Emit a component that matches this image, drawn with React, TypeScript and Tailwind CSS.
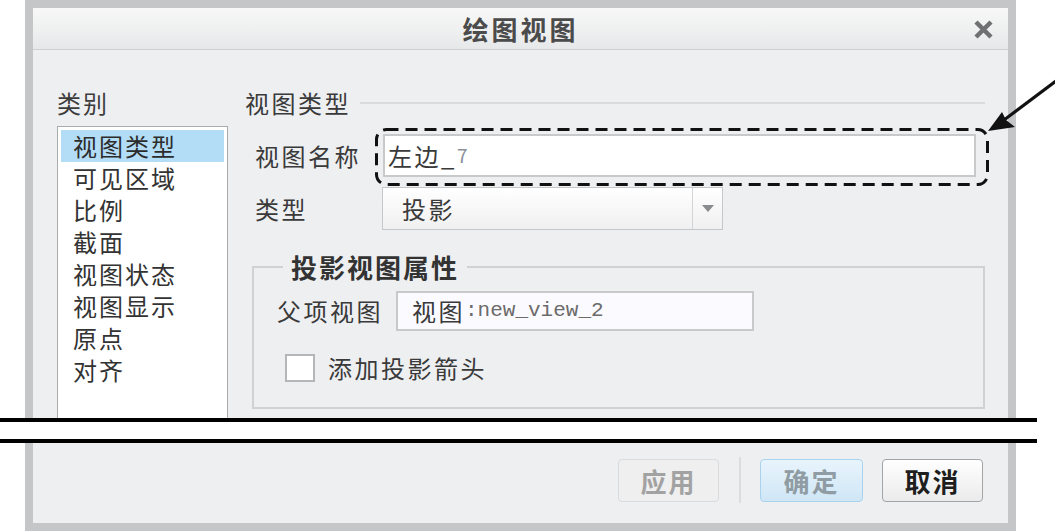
import React from 'react';

const categories = ['视图类型', '可见区域', '比例', '截面', '视图状态', '视图显示', '原点', '对齐'];

function TitleBar() {
  return (
    <div className="grid h-[42px] shrink-0 grid-cols-[1fr_auto_1fr] items-center border-b border-[#cdcfd1] bg-linear-to-b from-[#f8f8f8] to-[#e7e8e9]">
      <div />
      <div className="text-[26px] leading-[42px] font-bold tracking-[3px] text-[#4b4b4b]">绘图视图</div>
      <div className="flex justify-end pr-[15px]">
        <svg width="19" height="19" viewBox="0 0 19 19">
          <path d="M2 2 L17 17 M17 2 L2 17" stroke="#6f7072" strokeWidth="4.5" />
        </svg>
      </div>
    </div>
  );
}

function CategoryList() {
  return (
    <div className="flex flex-col pt-[37px]">
      <div className="h-[32px] text-[24px] leading-[32px] tracking-[2px] text-[#3c3c3c]">类别</div>
      <div className="mt-[7px] flex w-[171px] flex-1 flex-col border border-b-0 border-[#a9abad] bg-white px-[3px] pt-[3px]">
        {categories.map((c, i) => (
          <div
            key={c}
            className={
              i === 0
                ? 'h-[32px] bg-[#b3dcf6] pl-[12px] text-[24px] leading-[32px] tracking-[2px] text-[#2c2c2c]'
                : 'h-[32px] pl-[12px] text-[24px] leading-[32px] tracking-[2px] text-[#333]'
            }
          >
            {c}
          </div>
        ))}
      </div>
    </div>
  );
}

function ViewTypePanel() {
  return (
    <div className="ml-[17px] flex w-[740px] flex-col pt-[37px] text-[24px] tracking-[2.5px] text-[#3a3a3a]">
      <div className="flex h-[32px] items-center">
        <span className="leading-[32px]">视图类型</span>
        <div className="ml-[9px] h-[2px] flex-1 bg-[#dadbdd]" />
      </div>

      <div className="mt-[15px] flex h-[43px] items-center">
        <div className="w-[138px] pl-[10px]">视图名称</div>
        <div className="relative flex h-[43px] w-[593px] items-center border-2 border-[#c8c9cb] bg-white pl-[3px]">
          <span>左边_</span>
          <span className="text-[19px] text-[#8a8f99]">7</span>
          <svg className="pointer-events-none absolute left-[-10px] top-[-8px]" width="614" height="58" viewBox="0 0 614 58">
            <rect x="1.5" y="1.5" width="611" height="55" rx="10" fill="none" stroke="#111" strokeWidth="3" strokeDasharray="12 7" />
          </svg>
        </div>
      </div>

      <div className="mt-[10px] flex h-[43px] items-center">
        <div className="w-[137px] pl-[10px]">类型</div>
        <div className="flex h-[43px] w-[341px] items-stretch border border-[#c6c7c9] bg-linear-to-b from-white to-[#f0f0f0]">
          <div className="flex flex-1 items-center pl-[19px]">投影</div>
          <div className="flex w-[30px] items-center justify-center border-l border-[#d3d4d6]">
            <svg width="12" height="7" viewBox="0 0 12 7">
              <path d="M0 0 H12 L6 7 Z" fill="#8a8b8d" />
            </svg>
          </div>
        </div>
      </div>

      <fieldset className="mt-[21px] ml-[7px] h-[158px] w-[733px] border-2 border-[#cfd1d3]">
        <legend className="ml-[29px] px-[8px] text-[26px] leading-[32px] font-bold tracking-[2px] text-[#333]">投影视图属性</legend>
        <div className="mt-[8px] flex h-[40px] items-center">
          <div className="w-[142px] pl-[23px]">父项视图</div>
          <div className="flex h-[40px] w-[358px] items-center border-2 border-[#c8c9cb] bg-[#fbfaff] pl-[14px]">
            <span>视图</span>
            <span className="font-['Liberation_Mono',monospace] text-[21px] tracking-normal text-[#6b6b6b]">:new_view_2</span>
          </div>
        </div>
        <div className="mt-[19px] flex items-center">
          <div className="ml-[31px] h-[28px] w-[30px] border-2 border-[#b5b6b8] bg-white" />
          <span className="ml-[13px]">添加投影箭头</span>
        </div>
      </fieldset>
    </div>
  );
}

function BreakBand() {
  return (
    <div className="flex h-[25px] flex-col bg-white">
      <div className="h-[4px] w-[1037px] bg-black" />
      <div className="h-[17px]" />
      <div className="h-[4px] w-[1037px] bg-black" />
    </div>
  );
}

function ButtonBar() {
  return (
    <div className="flex items-center justify-end pt-[14px] pr-[25px] text-[26px] font-bold tracking-[2px]">
      <button className="h-[43px] w-[101px] rounded-[4px] border border-[#dadbdd] bg-[#efeff0] text-[#a2a2a2]">应用</button>
      <div className="ml-[20px] mr-[19px] h-[46px] w-[2px] bg-[#dcdddf]" />
      <button className="h-[43px] w-[103px] rounded-[4px] border border-[#a9d2ee] bg-linear-to-b from-[#e8f4fc] to-[#cfe6f6] text-[#909ca3]">确定</button>
      <button className="ml-[19px] h-[43px] w-[101px] rounded-[4px] border border-[#a3a4a6] bg-linear-to-b from-white to-[#ebebeb] text-[#1e1e1e]">取消</button>
    </div>
  );
}

export default function App() {
  return (
    <div className="relative h-[532px] w-[1055px] overflow-hidden bg-white font-['Noto_Sans_CJK_SC',sans-serif]">
      <div className="ml-[25px] flex h-[418px] w-[991px] flex-col border-x-[8px] border-t-[8px] border-[#c4c6c8] bg-[#eeeff1]">
        <TitleBar />
        <div className="flex min-h-0 flex-1 pl-[24px]">
          <CategoryList />
          <ViewTypePanel />
        </div>
      </div>

      <BreakBand />

      <div className="ml-[25px] h-[88px] w-[991px] border-x-[8px] border-b-[8px] border-[#c4c6c8] bg-[#eeeff1]">
        <ButtonBar />
      </div>

      {/* callout arrow */}
      <svg className="pointer-events-none absolute left-0 top-0" width="1055" height="532" viewBox="0 0 1055 532">
        <line x1="1056" y1="81" x2="1004" y2="120" stroke="#111" strokeWidth="3" />
        <polygon points="988,131 1015,127 1006,120 1002,112" fill="#111" />
      </svg>
    </div>
  );
}
